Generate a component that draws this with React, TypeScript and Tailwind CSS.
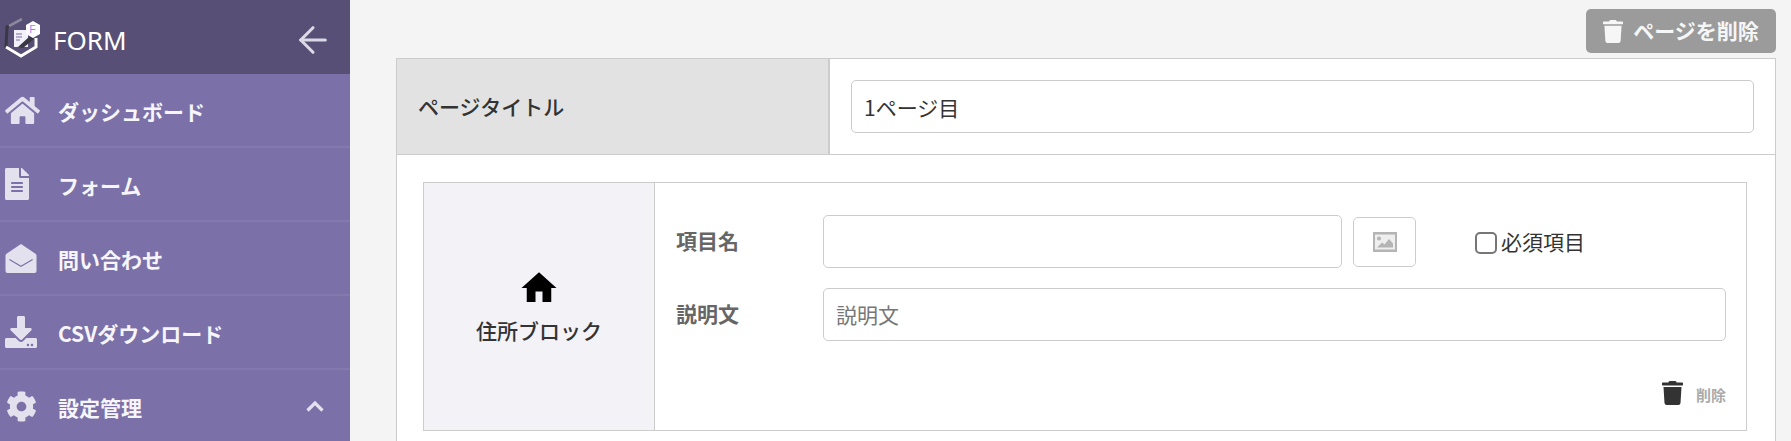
import type { ReactNode } from 'react'
import { FaHome, FaFileAlt, FaDownload, FaCog, FaTrash } from 'react-icons/fa'
import { FiArrowLeft } from 'react-icons/fi'
import { MdHome } from 'react-icons/md'

function Logo() {
  return (
    <svg viewBox="0 0 40 42" className="w-[40px] h-[42px] mt-[2px]">
      <path d="M21 2 L6 10 L5 30 L20 39" fill="none" stroke="#3a3844" strokeWidth="3" />
      <path d="M21 2 L8 9" fill="none" stroke="#8b87a0" strokeWidth="3" />
      <path d="M5 30 L20 39 L35 30 L35 21" fill="none" stroke="#ffffff" strokeWidth="3" />
      <path d="M13 13 H27 V30 H13 Z" fill="#f2f0f8" />
      <path d="M15 17 H21 M15 20 H21 M15 23 H19" stroke="#7b70a8" strokeWidth="1" />
      <path d="M17 30 L29 19 L33 22 L22 31 Z" fill="#3a3844" />
      <path d="M32 4 L39 8 V17 L32 21 L25 17 V8 Z" fill="#ffffff" />
      <text x="28.5" y="16" fontSize="10" fill="#9a7ff0" fontFamily="Liberation Sans, sans-serif">F</text>
    </svg>
  )
}

function MailOpen() {
  return (
    <svg viewBox="0 0 32 32" className="w-[32px] h-[31px]">
      <path
        d="M16 1 L31 11 Q32 12 32 13 V29 Q32 31 30 31 H2 Q0 31 0 29 V13 Q0 12 1 11 Z"
        fill="currentColor"
      />
      <path d="M4 17 L16 24 L28 17" fill="none" stroke="#7b70a8" strokeWidth="1.2" />
    </svg>
  )
}

function ImageIcon() {
  return (
    <svg viewBox="0 0 24 20" className="w-[24px] h-[20px]">
      <rect x="0" y="0" width="24" height="20" fill="#b4b4b4" />
      <rect x="2" y="2.5" width="20" height="15" fill="#eeeeee" />
      <circle cx="6" cy="6.5" r="2" fill="#b4b4b4" />
      <path d="M4 15.5 L9 10.5 L11.5 12.5 L16 7 L20 11.5 V15.5 Z" fill="#b4b4b4" />
    </svg>
  )
}

function NavItem({ icon, label, right }: { icon: ReactNode; label: string; right?: ReactNode }) {
  return (
    <div className="h-[74px] shrink-0 flex items-center pl-[5px] pr-[26px] border-b-2 border-[#8479ae]">
      <div className="w-[53px] flex items-center text-[#e4e1ee] text-[32px]">{icon}</div>
      <span className="flex-1 text-[21px] font-bold text-[#f6f5fa] leading-none pt-[3px]">{label}</span>
      {right}
    </div>
  )
}

function App() {
  return (
    <div className="h-screen overflow-hidden flex bg-[#f4f4f4] font-['Noto_Sans_CJK_JP','Noto_Sans',sans-serif] text-[#333]">
      <aside className="w-[350px] shrink-0 flex flex-col bg-[#7b70a8]">
        <div className="h-[74px] shrink-0 flex items-center pl-[1px] pr-[16px] bg-[#574f75]">
          <Logo />
          <span className="ml-[12px] flex-1 text-[26px] text-white font-['Noto_Sans',sans-serif] pt-[6px]">FORM</span>
          <FiArrowLeft className="text-[#dcd9e6] w-[42px] h-[42px] mt-[6px] [stroke-width:1.8]" />
        </div>
        <NavItem icon={<FaHome className="w-[35px] h-[31px]" />} label="ダッシュボード" />
        <NavItem icon={<FaFileAlt className="w-[24px] h-[32px]" />} label="フォーム" />
        <NavItem icon={<MailOpen />} label="問い合わせ" />
        <NavItem icon={<FaDownload className="w-[32px] h-[32px]" />} label="CSVダウンロード" />
        <NavItem
          icon={<FaCog className="w-[31px] h-[31px] ml-[1px]" />}
          label="設定管理"
          right={
            <svg viewBox="0 0 18 12" className="w-[18px] h-[12px] text-[#e4e1ee]">
              <path d="M1.5 10.5 L9 3 L16.5 10.5" fill="none" stroke="currentColor" strokeWidth="3.2" />
            </svg>
          }
        />
      </aside>
      <main className="flex-1 pl-[46px] pr-[15px] pt-[9px] min-w-0">
        <div className="flex justify-end mb-[5px]">
          <button className="h-[44px] w-[190px] rounded-[5px] bg-[#9b9b9b] text-[#f6f6f6] flex items-center justify-center gap-[10px] font-bold text-[21px]">
            <FaTrash className="w-[20px] h-[23px]" />
            ページを削除
          </button>
        </div>
        <div className="border border-[#cccccc] bg-white">
          <div className="flex h-[96px] border-b border-[#cccccc]">
            <div className="w-[433px] shrink-0 bg-[#e2e2e2] border-r-2 border-[#cccccc] flex items-center pl-[21px] pt-[1px] text-[21px] font-medium">
              ページタイトル
            </div>
            <div className="flex-1 flex items-center pl-[21px] pr-[21px]">
              <div className="w-full h-[53px] border border-[#cccccc] rounded-[5px] flex items-center pl-[12px] pt-[3px] text-[21px]">
                1ページ目
              </div>
            </div>
          </div>
          <div className="pt-[27px] pl-[26px] pr-[28px] pb-[20px]">
            <div className="flex h-[249px] border border-[#cccccc]">
              <div className="w-[231px] shrink-0 bg-[#f2f2f7] border-r border-[#cccccc] flex flex-col items-center justify-center pb-[6px]">
                <MdHome className="w-[42px] h-[42px] text-black" />
                <span className="text-[21px] font-medium leading-none mt-[11px]">住所ブロック</span>
              </div>
              <div className="flex-1 pl-[21px] pr-[20px] pt-[32px] flex flex-col">
                <div className="flex items-center h-[53px]">
                  <span className="w-[147px] shrink-0 text-[21px] font-bold text-[#666] pb-[2px]">項目名</span>
                  <div className="w-[519px] h-[53px] border border-[#cccccc] rounded-[5px] bg-white" />
                  <div className="ml-[11px] w-[63px] h-[50px] border border-[#cccccc] rounded-[5px] flex items-center justify-center">
                    <ImageIcon />
                  </div>
                  <label className="ml-[59px] flex items-center gap-[4px] text-[21px] leading-none">
                    <span className="w-[22px] h-[22px] border-2 border-[#767676] rounded-[5px] bg-white mt-[2px]" />
                    必須項目
                  </label>
                </div>
                <div className="flex items-center h-[53px] mt-[20px]">
                  <span className="w-[147px] shrink-0 text-[21px] font-bold text-[#666] pb-[2px]">説明文</span>
                  <div className="flex-1 h-[53px] border border-[#cccccc] rounded-[5px] flex items-center pl-[12px] text-[21px] text-[#777]">
                    説明文
                  </div>
                </div>
                <div className="flex justify-end items-center mt-[40px] gap-[13px]">
                  <FaTrash className="w-[21px] h-[24px] text-[#333]" />
                  <span className="text-[15px] font-bold text-[#aaa] leading-none mt-[2px]">削除</span>
                </div>
              </div>
            </div>
          </div>
        </div>
      </main>
    </div>
  )
}

export default App
